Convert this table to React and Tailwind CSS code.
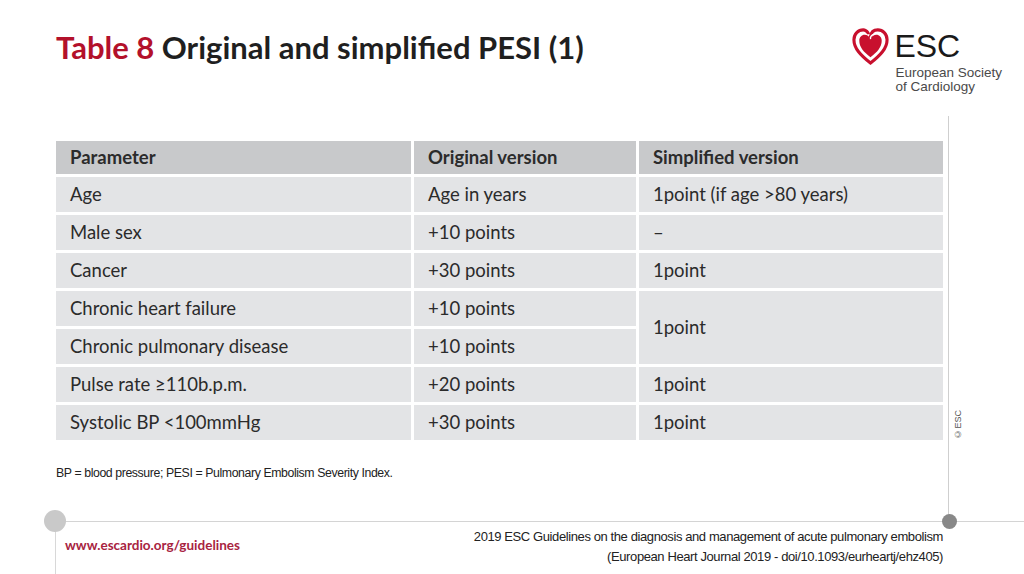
const ROWS = [
  ['Age', 'Age in years', '1point (if age >80 years)'],
  ['Male sex', '+10 points', '–'],
  ['Cancer', '+30 points', '1point'],
  ['Chronic heart failure', '+10 points', null],
  ['Chronic pulmonary disease', '+10 points', 'skip'],
  ['Pulse rate ≥110b.p.m.', '+20 points', '1point'],
  ['Systolic BP <100mmHg', '+30 points', '1point'],
];

function EscLogo() {
  return (
    <div className="flex items-start gap-[4px]">
      <svg width="39" height="39" viewBox="0 0 40 40">
        {/* outer ring, open at the top where it curls inward */}
        <path
          d="M17.5 6 C16 4 14.5 3 12.5 3 C7.5 3 3 7 3 13 C3 22 10 29 20 37 C30 29 37 22 37 13 C37 7 32.5 3 27.5 3 C23.5 3 20.5 5.5 20 10"
          fill="none"
          stroke="#c8102e"
          strokeWidth="3.2"
          strokeLinecap="round"
        />
        <path
          d="M20 31 C13 25.5 8.5 20.5 8.5 14 C8.5 10.5 11 8 14 8 C16.5 8 18.5 9.5 20 12 C21.5 9.5 23.5 8 26 8 C29 8 31.5 10.5 31.5 14 C31.5 20.5 27 25.5 20 31 Z"
          fill="#c8102e"
        />
        <path d="M20 12.5 C19.5 9.5 21.5 7.5 24.5 7.6" fill="none" stroke="#fff" strokeWidth="1.4" />
      </svg>
      <div className="flex flex-col">
        <span className="text-[32px] leading-[34px] text-[#1a1a1a] font-['Liberation_Sans',sans-serif] mt-[2px]">ESC</span>
        <span className="text-[13.5px] leading-[14px] text-[#4a4a4a] font-['Liberation_Sans',sans-serif] mt-[3px] ml-[1px]">European Society</span>
        <span className="text-[13.5px] leading-[14px] text-[#4a4a4a] font-['Liberation_Sans',sans-serif] ml-[1px]">of Cardiology</span>
      </div>
    </div>
  );
}

function Cell({ children, header, className = '' }) {
  return (
    <div
      className={`flex items-center px-[14px] text-[18.5px] text-[#2b2b2b] ${header ? 'bg-[#c8c9cb] font-bold' : 'bg-[#e3e4e6]'} ${className}`}
    >
      {children}
    </div>
  );
}

export default function App() {
  return (
    <div className="relative w-[1024px] h-[574px] bg-white overflow-hidden font-['Lato','Open_Sans',sans-serif]">
      {/* decorative rules */}
      <div className="absolute left-[948px] top-[116px] w-px h-[405px] bg-[#cfcfcf]" />
      <div className="absolute left-[55px] top-[521px] w-[969px] h-px bg-[#d4d4d4]" />
      <div className="absolute left-[55px] top-[521px] w-px h-[53px] bg-[#d8d8d8]" />
      <div className="absolute left-[44px] top-[510px] w-[22px] h-[22px] rounded-full bg-[#c9c9c9]" />
      <div className="absolute left-[942px] top-[514px] w-[15px] h-[15px] rounded-full bg-[#888]" />
      <div className="absolute left-[952px] top-[410px] text-[9px] text-[#555] [writing-mode:vertical-rl] rotate-180 font-['Liberation_Sans',sans-serif]">
        ©ESC
      </div>

      <div className="flex justify-between pl-[56px] pr-[22px] pt-[27px]">
        <h1 className="text-[31px] font-bold text-[#1f1f1f] leading-[40px]">
          <span className="text-[#b3112b]">Table 8</span> Original and simplified PESI (1)
        </h1>
        <EscLogo />
      </div>

      <div className="ml-[56px] mt-[47px] w-[887px] grid grid-cols-[355px_222px_304px] gap-[3px] grid-rows-[33px_repeat(7,35px)]">
        <Cell header>Parameter</Cell>
        <Cell header>Original version</Cell>
        <Cell header>Simplified version</Cell>
        {ROWS.map(([a, b, c], i) => (
          <div key={i} className="contents">
            <Cell>{a}</Cell>
            <Cell>{b}</Cell>
            {c === null ? (
              <Cell className="row-span-2">1point</Cell>
            ) : c === 'skip' ? null : (
              <Cell>{c}</Cell>
            )}
          </div>
        ))}
      </div>

      <p className="ml-[56px] mt-[24px] text-[12.3px] text-[#222] tracking-[-0.4px] font-['Liberation_Sans',sans-serif]">
        BP = blood pressure; PESI = Pulmonary Embolism Severity Index.
      </p>

      <div className="flex justify-between items-start pl-[65px] pr-[81px] mt-[45px]">
        <span className="text-[13.5px] font-bold text-[#a8243f] mt-[8px]">www.escardio.org/guidelines</span>
        <div className="flex flex-col items-end text-[13px] text-[#222] leading-[20px] tracking-[-0.4px] font-['Liberation_Sans',sans-serif]">
          <span>2019 ESC Guidelines on the diagnosis and management of acute pulmonary embolism</span>
          <span>(European Heart Journal 2019 - doi/10.1093/eurheartj/ehz405)</span>
        </div>
      </div>
    </div>
  );
}
